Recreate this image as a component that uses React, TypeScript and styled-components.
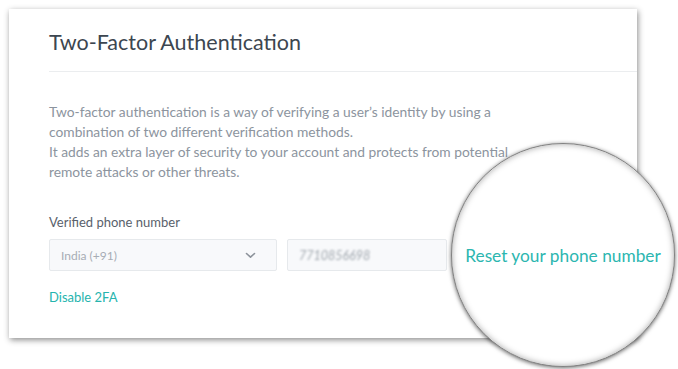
import React from "react";
import styled, { createGlobalStyle } from "styled-components";

const Global = createGlobalStyle`
  html, body { margin: 0; padding: 0; background: #ffffff; }
  body { font-family: Lato, "Open Sans", Arial, sans-serif; }
  * { box-sizing: border-box; }
`;

const Stage = styled.div`
  position: relative;
  width: 678px;
  height: 369px;
  padding: 9px;
  overflow: hidden;
`;

const Card = styled.section`
  width: 628px;
  height: 329px;
  background: #ffffff;
  box-shadow: 1px 2px 6px rgba(0, 0, 0, 0.45);
  padding: 21px 0 0 40px;
  display: flex;
  flex-direction: column;
`;

const Title = styled.h1`
  margin: 0;
  font-size: 21.5px;
  line-height: 24px;
  font-weight: 400;
  color: #3c4650;
`;

const Divider = styled.hr`
  margin: 17px 0 0 0;
  border: 0;
  height: 1px;
  background: #ebedef;
`;

const Description = styled.p`
  margin: 30px 0 0 0;
  font-size: 13.8px;
  line-height: 20px;
  color: #8c949e;
  white-space: nowrap;
`;

const Label = styled.div`
  margin-top: 30px;
  font-size: 13px;
  line-height: 20px;
  color: #59616b;
`;

const FieldRow = styled.div`
  margin-top: 7px;
  display: flex;
  gap: 10px;
`;

const Field = styled.div<{ $width: number }>`
  width: ${(p) => p.$width}px;
  height: 32px;
  border: 1px solid #e6e9ec;
  border-radius: 2px;
  background: #f8f9fb;
  display: flex;
  align-items: center;
  justify-content: space-between;
  padding: 0 20px 0 11px;
  font-size: 12px;
  color: #a7adb5;
`;

const Blurred = styled.span`
  filter: blur(1.3px);
  font-style: italic;
  font-size: 12.5px;
  color: #a0a7ae;
`;

const Link = styled.a`
  margin-top: 16px;
  font-size: 13px;
  line-height: 20px;
  color: #25b4ae;
  text-decoration: none;
  align-self: flex-start;
`;

const Magnifier = styled.div`
  position: absolute;
  left: 451px;
  top: 143px;
  width: 224px;
  height: 224px;
  border-radius: 50%;
  background: #ffffff;
  border: 1.5px solid #828282;
  box-shadow: 0 1px 4px rgba(0, 0, 0, 0.6), inset 0 0 6px rgba(0, 0, 0, 0.35);
  display: flex;
  align-items: center;
  justify-content: center;
`;

const ZoomLink = styled.span`
  font-size: 17.3px;
  color: #2cb6b0;
  white-space: nowrap;
  margin-top: 1px;
`;

const Chevron = () => (
  <svg width="11" height="7" viewBox="0 0 11 7" fill="none">
    <path d="M1.5 1.5 L5.5 5.2 L9.5 1.5" stroke="#8d939b" strokeWidth="1.6" strokeLinecap="round" strokeLinejoin="round" />
  </svg>
);

export default function App() {
  return (
    <>
      <Global />
      <Stage>
        <Card>
          <Title>Two-Factor Authentication</Title>
          <Divider />
          <Description>
            Two-factor authentication is a way of verifying a user’s identity by using a
            <br />
            combination of two different verification methods.
            <br />
            It adds an extra layer of security to your account and protects from potential
            <br />
            remote attacks or other threats.
          </Description>
          <Label>Verified phone number</Label>
          <FieldRow>
            <Field $width={228}>
              <span>India (+91)</span>
              <Chevron />
            </Field>
            <Field $width={160}>
              <Blurred>7710856698</Blurred>
            </Field>
          </FieldRow>
          <Link href="#">Disable 2FA</Link>
        </Card>
        <Magnifier>
          <ZoomLink>Reset your phone number</ZoomLink>
        </Magnifier>
      </Stage>
    </>
  );
}
